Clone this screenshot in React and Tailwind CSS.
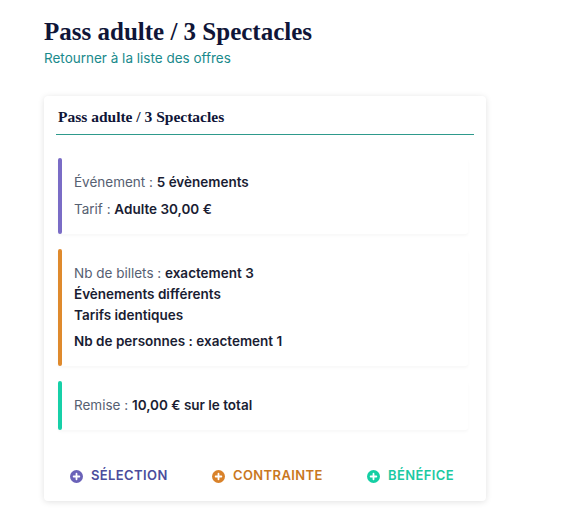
import React from "react";

const Plus = ({ color }) => (
  <svg width="13" height="13" viewBox="0 0 16 16" className="shrink-0">
    <circle cx="8" cy="8" r="8" fill={color} />
    <path d="M8 4.5v7M4.5 8h7" stroke="#fff" strokeWidth="2.2" strokeLinecap="round" />
  </svg>
);

const Section = ({ bar, children }) => (
  <div className="flex rounded-[3px] bg-white shadow-[0_2px_3px_rgba(0,0,0,0.03)]">
    <div className={`w-[4px] rounded-[3px] ${bar}`} />
    <div className="flex-1 px-3 py-[14px] text-[13.5px] leading-[21px] text-[#1a1d33]">{children}</div>
  </div>
);

const Label = ({ children }) => <span className="font-normal text-[#566072]">{children}</span>;

export default function App() {
  return (
    <div className="min-h-[528px] bg-white pl-[44px] pt-[17px] font-['Inter',sans-serif]">
      <h1 className="font-['Liberation_Serif',serif] text-[25px] font-bold leading-[30px] text-[#0f1538]">
        Pass adulte / 3 Spectacles
      </h1>
      <a href="#" className="mt-[2px] block text-[13.5px] leading-[18px] text-[#1a8a8c]">
        Retourner à la liste des offres
      </a>

      <div className="mt-[29px] w-[442px] rounded-[4px] bg-white px-3 pt-[12px] shadow-[0_1px_6px_rgba(0,0,0,0.12)]">
        <div className="px-[2px] pb-[8px] font-['Liberation_Serif',serif] text-[15.5px] font-bold leading-[18px] text-[#0f1538]">
          Pass adulte / 3 Spectacles
        </div>
        <div className="h-px bg-[#2e9a8c]" />

        <div className="mt-[23px] flex flex-col gap-[15px] pl-[2px] pr-[6px]">
          <Section bar="bg-[#7a6cc6]">
            <p>
              <Label>Événement : </Label>
              <b className="font-semibold">5 évènements</b>
            </p>
            <p className="mt-[6px]">
              <Label>Tarif : </Label>
              <b className="font-semibold">Adulte 30,00 €</b>
            </p>
          </Section>

          <Section bar="bg-[#df8a2d]">
            <p>
              <Label>Nb de billets : </Label>
              <b className="font-semibold">exactement 3</b>
            </p>
            <p className="font-semibold">Évènements différents</p>
            <p className="font-semibold">Tarifs identiques</p>
            <p className="mt-[5px] font-semibold">Nb de personnes : exactement 1</p>
          </Section>

          <Section bar="bg-[#17d0a8]">
            <p>
              <Label>Remise : </Label>
              <b className="font-semibold">10,00 € sur le total</b>
            </p>
          </Section>
        </div>

        <div className="mt-[27px] flex justify-between pb-[6px] pl-[14px] pr-[20px]">
          <button className="flex h-[38px] items-center gap-[8px] text-[13px] font-semibold uppercase tracking-[0.03em] text-[#4b4d9c]">
            <Plus color="#6a62b8" />
            Sélection
          </button>
          <button className="flex h-[38px] items-center gap-[8px] text-[13px] font-semibold uppercase tracking-[0.03em] text-[#c9781f]">
            <Plus color="#d9822a" />
            Contrainte
          </button>
          <button className="flex h-[38px] items-center gap-[8px] text-[13px] font-semibold uppercase tracking-[0.03em] text-[#1cc9a2]">
            <Plus color="#14cfa4" />
            Bénéfice
          </button>
        </div>
      </div>
    </div>
  );
}
